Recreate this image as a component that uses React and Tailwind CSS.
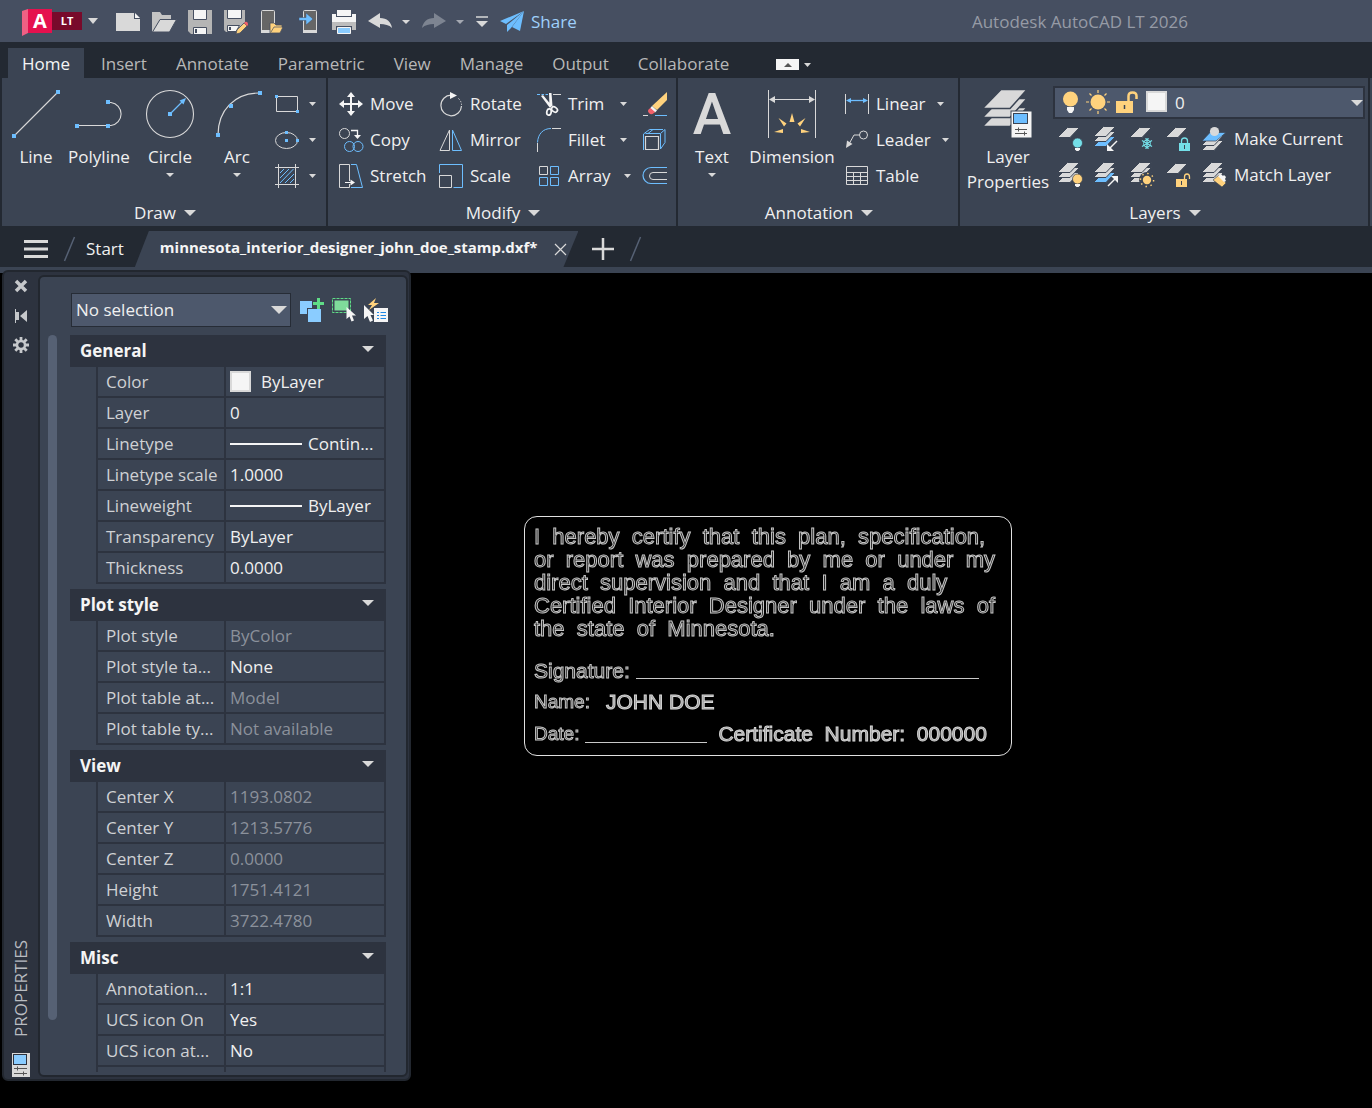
import React from "react";

const W = "#d9d9d9";
const B = "#6dbeff";
const Y = "#ffd27d";
const T = "#74dfe8";
const BG = "#3b4453";

const Svg = ({ w = 24, h = 24, children }) => (
  <svg width={w} height={h} viewBox={`0 0 ${w} ${h}`} fill="none" className="shrink-0 overflow-visible" aria-hidden="true">
    {children}
  </svg>
);

const Caret = ({ w = 8, h = 4, color = W }) => (
  <Svg w={w} h={h}>
    <path d={`M0 0H${w}L${w / 2} ${h}Z`} fill={color} />
  </Svg>
);

const Dot = ({ x, y, s = 4 }) => <rect x={x - s / 2} y={y - s / 2} width={s} height={s} fill={B} />;

/* ---------- quick access icons ---------- */
const Disk = () => (
  <>
    <path d="M0 0H24V24H3L0 21Z" fill="#b5b5b5" />
    <path d="M5.500 0V9.500H18.500V0" fill="#f5f5f5" stroke="#464f61" />
    <path d="M5.500 24V17.500H18.500V24" fill="#f5f5f5" stroke="#464f61" />
    <path d="M7 19H9V23H7Z" fill="#464f61" />
  </>
);
const quick = [
  ["New", <Svg><path d="M0 3H18V9H24V21H0Z" fill={W} /><path d="M19 3L24 8H19Z" fill="#f5f5f5" /></Svg>],
  ["Open", <Svg><path d="M0 22V2H8L10 5H19V10H8L1 22Z" fill="#c4c4c4" /><path d="M8 9.500H24.500L17.500 22H.5Z" fill={W} stroke="#464f61" /></Svg>],
  ["Save", <Svg><Disk /></Svg>],
  ["Save As", <Svg>
    <path d="M0 0H21V12L12 22H2L0 20Z" fill="#b5b5b5" />
    <path d="M3.500 0V8.500H17.500V0" fill="#f5f5f5" stroke="#464f61" />
    <path d="M3.500 15.500H15.500L12 21.500H3.500Z" fill="#f5f5f5" stroke="#464f61" />
    <path d="M5 17H7V20H5Z" fill="#464f61" />
    <path d="M13 20L20 13L23 16L16 23L12 24Z" fill={Y} stroke="#464f61" strokeWidth=".8" />
    <path d="M20 13L21 12Q24 11 24 15L23 16Z" fill="#f2606a" />
  </Svg>],
  ["Open from Web & Mobile", <Svg>
    <rect x="1.500" y=".5" width="13" height="22" rx="1" fill="#666" stroke={W} />
    <path d="M1 20H15V23H1Z" fill={W} />
    <path d="M10 22V13H14L16 15H22V17H23L20 23H10Z" fill={Y} stroke="#464f61" strokeWidth=".8" />
    <path d="M11 22L14 17H23" stroke="#464f61" strokeWidth=".7" />
  </Svg>],
  ["Save to Web & Mobile", <Svg>
    <rect x="7.500" y=".5" width="13" height="22" rx="1" fill="#666" stroke={W} />
    <path d="M7 20H21V23H7Z" fill={W} />
    <path d="M3 7.500H10V3L17 9L10 15V10.500H3Z" fill={B} stroke="#464f61" strokeWidth=".5" />
  </Svg>],
  ["Plot", <Svg>
    <path d="M5 0H19V6H5Z" fill="#f5f5f5" />
    <path d="M0 4H4V7H20V4H24V12H0Z" fill="#f5f5f5" />
    <path d="M0 12H24V20H20V16H4V20H0Z" fill="#bdbdbd" />
    <path d="M5.500 17.500H18.500V23.500H5.500Z" fill="#8accff" stroke="#f5f5f5" />
  </Svg>],
];
const Undo = ({ color }) => (
  <Svg><path d="M0 11L12 3V8C19 8 23 12 24 18C21 15 17 14 12 14V18Z" fill={color} /></Svg>
);

/* ---------- draw icons ---------- */
const LineIcon = () => <Svg w={48} h={48}><path d="M3 45L45 3" stroke={W} strokeWidth="1.100" /><Dot x={2} y={46} /><Dot x={46} y={2} /></Svg>;
const PolylineIcon = () => <Svg w={48} h={48}><path d="M2 35.500H36A11.600 11.600 0 0 0 36 12.500H33" stroke={W} strokeWidth="1.100" /><Dot x={2} y={36} /><Dot x={33} y={36} /><Dot x={33} y={12} /></Svg>;
const CircleIcon = () => (
  <Svg w={48} h={48}>
    <circle cx="24" cy="24" r="23.500" stroke={W} strokeWidth="1.100" />
    <path d="M24 24L37 11" stroke={B} strokeWidth="1.200" />
    <path d="M40 8L37.500 14.500L33.500 10.500Z" fill={B} />
    <Dot x={24} y={24} />
  </Svg>
);
const ArcIcon = () => <Svg w={48} h={48}><path d="M5 45C5 20 22 3 46 3" stroke={W} strokeWidth="1.200" /><Dot x={5} y={45} /><Dot x={18} y={16} /><Dot x={47} y={3} /></Svg>;
const RectIcon = () => <Svg><path d="M1.500 4.500H22.500V19.500H1.500Z" stroke={W} /><Dot x={1.5} y={4.5} s={3} /><Dot x={22.5} y={19.5} s={3} /></Svg>;
const EllipseIcon = () => <Svg><ellipse cx="11.500" cy="12.500" rx="11" ry="8" stroke={W} /><Dot x={11.5} y={4.5} s={3} /><Dot x={11.5} y={12.5} s={3} /><Dot x={22.5} y={12.5} s={3} /></Svg>;
const HatchIcon = () => (
  <Svg>
    <path d="M0 3.500H24M0 20.500H24M3.500 0V24M20.500 0V24" stroke={W} />
    <path d="M5 9L9 5M5 14L14 5M5 19L18.500 5M10 19L19 10M15 19L19 15" stroke={B} />
  </Svg>
);

/* ---------- modify icons ---------- */
const MoveIcon = () => (
  <Svg>
    <path d="M4 12H20M12 4V20" stroke="#f5f5f5" strokeWidth="2" />
    <path d="M12 0L16 5H8ZM12 24L16 19H8ZM0 12L5 8V16ZM24 12L19 8V16Z" fill="#f5f5f5" />
  </Svg>
);
const RotateIcon = () => <Svg><path d="M12 3.200A10.300 10.300 0 1 0 22.500 14" stroke={W} strokeWidth="1.200" /><path d="M11 0L18 3.500L11 7Z" fill="#f5f5f5" /><path d="M19.500 6.500Q22.500 9.500 22.500 13" stroke={W} strokeDasharray="1.500 1.500" /></Svg>;
const TrimIcon = () => (
  <Svg>
    <path d="M0 2.500H3M4.500 2.500H7M8.500 2.500H11" stroke={B} />
    <path d="M16 2.500H24" stroke={W} />
    <path d="M4 4L6 3L15 14L13 16ZM12 1H14.500L15.500 14L12.500 15Z" fill="#f5f5f5" />
    <ellipse cx="12" cy="20" rx="2.200" ry="3.200" stroke="#f5f5f5" strokeWidth="1.700" transform="rotate(12 12 20)" />
    <ellipse cx="17.500" cy="17.500" rx="2.300" ry="3.200" stroke="#f5f5f5" strokeWidth="1.700" transform="rotate(-55 17.500 17.500)" />
  </Svg>
);
const CopyIcon = () => (
  <Svg>
    <circle cx="5.500" cy="5.500" r="5" stroke={W} />
    <circle cx="10.500" cy="18.500" r="5" stroke={B} />
    <circle cx="19" cy="18.500" r="5" stroke={B} />
    <path d="M12 2.500H18.500V8" stroke="#f5f5f5" strokeWidth="1.300" />
    <path d="M15 7H22L18.500 11Z" fill="#f5f5f5" />
  </Svg>
);
const MirrorIcon = () => <Svg><path d="M10.500 2V22.500H1Z" stroke={W} /><path d="M13.500 2V22.500H22.500Z" stroke={B} /></Svg>;
const FilletIcon = () => <Svg><path d="M.5 14.500C1 6 6 .5 14 .5" stroke={B} /><path d="M15 .5H24M.5 15V24" stroke={W} /></Svg>;
const StretchIcon = () => (
  <Svg>
    <path d="M10.500 17V.5H.5V23.500H10.500V20" stroke={W} />
    <path d="M12 .5H17.500L23.500 23.500H12" stroke={B} />
    <path d="M6 18.500H13" stroke="#f5f5f5" />
    <path d="M11.500 15.500L16 18.500L11.500 21.500Z" fill="#f5f5f5" />
  </Svg>
);
const ScaleIcon = () => <Svg><path d="M.5 9V.5H23.500V23.500H14.500" stroke={B} /><path d="M.5 11.500H12.500V23.500H.5Z" stroke={W} /></Svg>;
const ArrayIcon = () => (
  <Svg>
    <path d="M2.500 2.500H10.500V10.500H2.500Z" stroke={W} />
    <path d="M13.500 2.500H21.500V10.500H13.500ZM2.500 13.500H10.500V21.500H2.500ZM13.500 13.500H21.500V21.500H13.500Z" stroke={B} />
  </Svg>
);
const EraseIcon = () => (
  <Svg>
    <path d="M24 0V8L14 18L9 14Z" fill={Y} />
    <path d="M9 14L14 18.500L12 20.500L7 16.500Z" fill="#f5f5f5" />
    <path d="M7.500 16L12 20L11 21Q8 23.500 6 21Q4 19 6 17Z" fill="#f2606a" />
    <path d="M0 23.500H5" stroke={W} /><path d="M12 23.500H24" stroke={B} />
  </Svg>
);
const ExplodeIcon = () => (
  <Svg>
    <path d="M2.500 8.500H15.500V21.500H2.500Z" stroke={W} strokeWidth="1.200" />
    <path d="M.5 22V6L6.500 1.500H20M2.500 5.500H17.500L22 1.500V14.500L17.500 21V6M10 1.500L5 5.500" stroke={B} />
  </Svg>
);
const OffsetIcon = () => <Svg><path d="M24 3.500H8A7.500 7.500 0 0 0 8 19.500H24" stroke={B} strokeWidth="1.200" /><path d="M24 8.500H10A3.500 3.500 0 0 0 10 15.500H24" stroke={W} /></Svg>;

/* ---------- annotation icons ---------- */
const DimensionIcon = () => (
  <Svg w={48} h={48}>
    <path d="M.5 0V48M47.500 0V48M3 9.500H45" stroke={W} />
    <path d="M1 9.500L7 6V13ZM47 9.500L41 6V13Z" fill={W} />
    <path d="M24 23L26.500 32H21.500ZM10.500 28L18.500 33.500L16 36.500ZM37.500 28L29.500 33.500L32 36.500ZM6 42L15 39V43ZM42 42L33 39V43Z" fill={Y} />
  </Svg>
);
const LinearIcon = () => <Svg><path d="M.5 2V22M23.500 2V22" stroke={W} /><path d="M3 8.500H21" stroke={B} strokeWidth="1.300" /><path d="M1 8.500L6 6V11ZM23 8.500L18 6V11Z" fill={B} /></Svg>;
const LeaderIcon = () => <Svg><circle cx="18.500" cy="7" r="4" stroke={W} /><path d="M14.500 7H9L4 16" stroke={W} /><path d="M1 20L2 12.500L7.500 16Z" fill={W} /></Svg>;
const TableIcon = () => <Svg><path d="M1.500 2.500H22.500V20.500H1.500ZM1.500 8.500H22.500M1.500 12.500H22.500M1.500 16.500H22.500M8.500 8.500V20.500M15.500 8.500V20.500" stroke={W} /></Svg>;

/* ---------- layer icons ---------- */
const Sheet = ({ dy = 0, fill = W }) => <path d={`M-.5 ${9.500 + dy}L9.500 ${dy - 0.500}H21.500L12 ${9.500 + dy}Z`} fill={fill} stroke={BG} strokeWidth="1" />;
const Stack = ({ last = W }) => (<><Sheet dy={10} fill={last} /><Sheet dy={5} /><Sheet /></>);
const Bulb = ({ color }) => (<><circle cx="19.500" cy="16" r="5" fill={color} stroke={BG} strokeWidth=".7" /><path d="M17 21H22V22.500L20.500 24H18.500L17 22.500Z" fill="#f5f5f5" /></>);
const layerRows = [
  [
    ["Off", <Svg><Sheet dy={1} /><Bulb color={T} /></Svg>],
    ["Isolate", <Svg><Stack last={B} /><path d="M23 14L16 21" stroke="#f5f5f5" strokeWidth="1.500" /><path d="M13 24V17L20 24Z" fill="#f5f5f5" /></Svg>],
    ["Freeze", <Svg><Sheet dy={1} /><path d="M17 11V22M12 13.500L22 19.500M22 13.500L12 19.500" stroke={T} strokeWidth="1.300" /><circle cx="17" cy="16.500" r="3.500" stroke={T} /><path d="M15 11.500L17 13L19 11.500M15 21.500L17 20L19 21.500" stroke={T} /></Svg>],
    ["Lock", <Svg><Sheet dy={1} /><path d="M15.500 16V14Q15.500 11 18.500 11T21.500 14V16" stroke={T} strokeWidth="1.300" /><path d="M13 16H24V24H13Z" fill={T} /><path d="M18.500 18V22" stroke={BG} /></Svg>],
  ],
  [
    ["Turn All Layers On", <Svg><Stack /><Bulb color={Y} /></Svg>],
    ["Unisolate", <Svg><Stack last={B} /><path d="M14 23L21 16" stroke="#f5f5f5" strokeWidth="1.500" /><path d="M24 13V20L17 13Z" fill="#f5f5f5" /></Svg>],
    ["Thaw All Layers", <Svg><Stack /><circle cx="17" cy="17" r="8" fill={BG} /><circle cx="17" cy="17" r="4.200" fill={Y} /><circle cx="17" cy="17" r="6.600" stroke={Y} strokeWidth="1.500" strokeDasharray="1.500 3.680" /></Svg>],
    ["Unlock", <Svg><Sheet dy={1} /><path d="M18.500 16V14Q18.500 11 21 11T23.500 14V16" stroke={Y} strokeWidth="1.300" /><path d="M10 16H21V24H10Z" fill={Y} /><path d="M15.500 18V22" stroke={BG} /></Svg>],
  ],
];
const MakeCurrentIcon = () => <Svg><Sheet dy={14} /><Sheet dy={9} /><path d="M0 14L8 5.500H24L14 14Z" fill={B} stroke={BG} strokeWidth=".7" /><circle cx="12.500" cy="4.500" r="4.600" fill={W} /></Svg>;
const MatchLayerIcon = () => <Svg><Stack /><path d="M11 17L17 12L24 20L20 24Z" fill={Y} stroke={BG} strokeWidth=".6" /><path d="M16 13L19 11L21 13L22 12L24 14L23 16L24 18L22 19Z" fill="#f5f5f5" /></Svg>;
const SliderSheet = ({ w = 21, h = 27 }) => (
  <>
    <rect width={w} height={h} fill="#f5f5f5" stroke={BG} strokeWidth="1" />
    <rect x="2.500" y="2.500" width={w - 7} height="10" fill={B} stroke={BG} />
    <path d={`M4 18.500H${w - 5}M4 22.500H${w - 5}M7.500 16.500V20.500M${w - 7.500} 20.500V24.500`} stroke="#555" />
  </>
);
const LayerPropsIcon = () => (
  <Svg w={48} h={48}>
    {[18, 9, 0].map((d) => <path key={d} d={`M-1.500 ${18.500 + d}L17 ${d - 0.500}H43L26 ${18.500 + d}Z`} fill={W} stroke={BG} strokeWidth="1.500" />)}
    <g transform="translate(27 21)"><SliderSheet /></g>
  </Svg>
);

/* ---------- ribbon parts ---------- */
const Panel = ({ title, className, children }) => (
  <section aria-label={title} className={`flex flex-col border-r-2 border-[#232932] ${className}`}>
    <div className="flex grow items-start pt-2">{children}</div>
    <button type="button" className="flex h-[26px] items-center justify-center gap-2 pl-[2px] leading-6">
      {title}
      <Caret w={12} h={6} />
    </button>
  </section>
);
const Big = ({ label, caret, icon, className }) => (
  <button type="button" className={`flex flex-col items-center pt-1 leading-[25px] ${className}`}>
    <span className="flex h-12 items-center justify-center">{icon}</span>
    <span className="mt-[6px]">{label}</span>
    {caret && <span className="mt-1 flex"><Caret /></span>}
  </button>
);
const Small = ({ label, icon, caret, className = "gap-[11px]" }) => (
  <div className={`flex h-9 items-center ${className}`}>
    <button type="button" className="flex items-center gap-[7px]">{icon}{label}</button>
    {caret && <button type="button" aria-label={`${label} options`}><Caret w={7} /></button>}
  </div>
);
const IconDrop = ({ label, icon }) => (
  <div className="flex h-9 items-center gap-[10px]">
    <button type="button" aria-label={label}>{icon}</button>
    <button type="button" aria-label={`${label} options`}><Caret w={7} /></button>
  </div>
);

/* ---------- properties palette ---------- */
const Swatch = () => <span className="inline-block size-[21px] border-2 border-[#d9d9d9] bg-[#f5f5f5]" />;
const Rule = () => <span className="inline-block h-[2px] w-[72px] bg-[#f5f5f5]" />;
const groups = [
  { name: "General", rows: [
    ["Color", <span className="flex items-center gap-[10px]"><Swatch />ByLayer</span>],
    ["Layer", "0"],
    ["Linetype", <span className="flex items-center gap-[6px]"><Rule />Contin...</span>],
    ["Linetype scale", "1.0000"],
    ["Lineweight", <span className="flex items-center gap-[6px]"><Rule />ByLayer</span>],
    ["Transparency", "ByLayer"],
    ["Thickness", "0.0000"],
  ] },
  { name: "Plot style", rows: [
    ["Plot style", "ByColor", true],
    ["Plot style ta...", "None"],
    ["Plot table at...", "Model", true],
    ["Plot table ty...", "Not available", true],
  ] },
  { name: "View", rows: [
    ["Center X", "1193.0802", true],
    ["Center Y", "1213.5776", true],
    ["Center Z", "0.0000", true],
    ["Height", "1751.4121", true],
    ["Width", "3722.4780", true],
  ] },
  { name: "Misc", rows: [
    ["Annotation...", "1:1"],
    ["UCS icon On", "Yes"],
    ["UCS icon at...", "No"],
    ["", ""],
  ] },
];

const Group = ({ name, rows }) => (
  <section className="mb-[5px]">
    <button type="button" className="flex h-8 w-full items-center justify-between bg-[#2d333f] pr-3 pl-[10px] font-bold text-[#f5f5f5]">
      {name}
      <span className="mb-1 flex"><Caret w={12} h={6} /></span>
    </button>
    <table className="ml-[26px] w-[290px] table-fixed border-separate border-spacing-0 text-left">
      <tbody>
        {rows.map(([k, v, dim], i) => (
          <tr key={i}>
            <th scope="row" className="h-[31px] w-[130px] overflow-hidden border-x-2 border-b-2 border-[#2d333f] p-0 pl-2 font-normal whitespace-nowrap text-[#cfd1d4]">{k}</th>
            <td className={`h-[31px] overflow-hidden border-r-2 border-b-2 border-[#2d333f] p-0 pl-1 whitespace-nowrap ${dim ? "text-[#8b919b]" : "text-[#f0f0f0]"}`}>{v}</td>
          </tr>
        ))}
      </tbody>
    </table>
  </section>
);

const Palette = () => (
  <aside aria-label="Properties" className="relative -mt-[3px] mb-[27px] ml-[2px] flex w-[409px] shrink-0 rounded-md border-2 border-[#22272f] bg-[#2d333f] pr-px pb-[2px]">
    <div className="flex w-[34px] shrink-0 flex-col items-center pt-[7px]">
      <button type="button" aria-label="Close"><Svg w={14} h={14}><path d="M2 2L12 12M12 2L2 12" stroke="#c6c8cb" strokeWidth="3.500" /></Svg></button>
      <button type="button" aria-label="Auto-hide" className="mt-4"><Svg w={14} h={14}><path d="M1.500 0V14" stroke="#c6c8cb" /><path d="M2 3H5V11H2ZM13 1V13L6 7Z" fill="#c6c8cb" /></Svg></button>
      <button type="button" aria-label="Settings" className="mt-[14px]">
        <Svg w={16} h={16}>
          <circle cx="8" cy="8" r="4" stroke="#c6c8cb" strokeWidth="2.500" />
          <path d="M8 0V4M8 12V16M0 8H4M12 8H16M2.300 2.300L5 5M11 11L13.700 13.700M13.700 2.300L11 5M5 11L2.300 13.700" stroke="#c6c8cb" strokeWidth="2.800" />
        </Svg>
      </button>
      <span className="mt-auto rotate-180 leading-5 text-[#b9bcc1] [writing-mode:vertical-rl]">PROPERTIES</span>
      <span className="mt-4 flex">
        <Svg w={18} h={24}>
          <rect width="18" height="24" fill="#d9d9d9" />
          <rect x="1.500" y="1.500" width="13" height="10" fill="#8accff" stroke="#2d333f" />
          <path d="M2 15.500H15M2 20.500H15M5.500 13.500V17.500M11.500 18.500V22.500" stroke="#555" />
        </Svg>
      </span>
    </div>
    <div className="mt-[3px] flex min-w-0 grow flex-col overflow-hidden rounded-md border-2 border-[#22272f] bg-[#3b4453] pb-[3px]">
      <div className="mt-4 ml-[31px] flex shrink-0 items-start gap-2">
        <div className="flex h-[34px] w-[220px] items-center border border-[#262c36] bg-[#4d586c] pr-[3px]">
          <select aria-label="Selection" className="h-full grow appearance-none bg-transparent pl-1 text-[#f0f0f0]">
            <option>No selection</option>
          </select>
          <Caret w={16} h={8} />
        </div>
        <button type="button" aria-label="Toggle PICKADD" className="mt-[5px] ml-px">
          <Svg><path d="M0 3H12V10H7V16H0Z" fill="#8accff" /><path d="M8 11H21V24H8Z" fill="#8accff" /><path d="M18.500 0V11M13 5.500H24" stroke="#5fdc87" strokeWidth="3" /></Svg>
        </button>
        <button type="button" aria-label="Select Objects" className="mt-[5px]">
          <Svg><path d="M2.500 2.500H16.500V12.500H2.500Z" fill="#7fdb9b" /><path d="M.5 .5H18.500V14.500H.5Z" stroke="#5fdc87" strokeDasharray="3 1" /><path d="M14.500 9V21L17.500 18.500L19.500 23.500L22 22.500L20 17.500H24Z" fill="#f5f5f5" /></Svg>
        </button>
        <button type="button" aria-label="Quick Select" className="mt-[5px]">
          <Svg><path d="M12 0L4 7H8L5 12L15 5H10Z" fill={Y} /><path d="M0 7V21L3.500 18L6 24L9 22.500L6.500 17H10Z" fill="#f5f5f5" /><path d="M10 10H24V24H10Z" fill="#f5f5f5" /><path d="M13 14.500H15M13 17.500H15M13 20.500H15M16.500 14.500H22M16.500 17.500H22M16.500 20.500H22" stroke="#1e88e5" /></Svg>
        </button>
      </div>
      <div className="mt-2 flex min-h-0 grow">
        <div className="mb-[52px] ml-2 w-[9px] shrink-0 rounded-full bg-[#566174]" />
        <div className="ml-[13px] w-[316px] overflow-hidden">
          {groups.map((g) => <Group key={g.name} {...g} />)}
        </div>
      </div>
    </div>
  </aside>
);

/* ---------- stamp drawing ---------- */
const outline = "text-[#222] [-webkit-text-stroke:1px_#c4c4c4]";
const bold = "text-[#999] [-webkit-text-stroke:1px_#d4d4d4]";
const stampLines = [
  "I  hereby  certify  that  this  plan,  specification,",
  "or  report  was  prepared  by  me  or  under  my",
  "direct  supervision  and  that  I  am  a  duly",
  "Certified  Interior  Designer  under  the  laws  of",
  "the  state  of  Minnesota.",
];
const Stamp = () => (
  <div className="absolute top-[243px] left-[113px] w-[488px] rounded-[13px] border-[1.5px] border-[#e0e0e0] pt-2 pr-4 pb-[5px] pl-[9px] font-['Liberation_Sans',Arial,sans-serif] whitespace-pre will-change-transform">
    <p className={`text-[22px] leading-[23px] ${outline}`}>
      {stampLines.map((l) => <span key={l} className="block">{l}</span>)}
    </p>
    <div className="mt-4 flex items-end gap-[6px] pr-4 leading-[30px]">
      <span className={`text-[21px] ${outline}`}>Signature:</span>
      <span className="mb-[7px] h-px grow bg-[#c8c8c8]" />
    </div>
    <div className="flex items-end gap-4 leading-8">
      <span className={`text-[19px] ${outline}`}>Name:</span>
      <span className={`text-[21px] ${bold}`}>JOHN DOE</span>
    </div>
    <div className="flex items-end gap-[6px] leading-8">
      <span className={`text-[19px] ${outline}`}>Date:</span>
      <span className="mb-[7px] h-px w-[122px] bg-[#c8c8c8]" />
      <span className={`ml-[5px] text-[21px] ${bold}`}>{"Certificate  Number:  000000"}</span>
    </div>
  </div>
);

const Slash = () => <Svg w={11} h={24}><path d="M10.500 0L.5 24" stroke="#566174" strokeWidth="1.500" /></Svg>;

export default function App() {
  return (
    <div className="flex h-screen flex-col overflow-hidden bg-black font-['Open_Sans','Noto_Sans',sans-serif] text-[17px] text-[#f0f0f0]">
      <header className="flex h-[42px] shrink-0 items-center bg-[#464f61] pt-[2px] pl-[22px]">
        <button type="button" aria-label="Application menu" className="flex items-center">
          <Svg w={6} h={28}><path d="M0 3L6 1V25L0 28Z" fill="#ef6084" /></Svg>
          <span className="mb-[2px] flex size-6 items-center justify-center bg-[#e5104e] text-[20px] leading-6 font-bold text-white">A</span>
          <span className="mb-[2px] flex h-[18px] w-[30px] items-center justify-center bg-[#780a2b] text-[11px] font-bold text-white">LT</span>
          <span className="mb-[2px] ml-[6px] flex"><Caret w={10} h={6} /></span>
        </button>
        <div className="ml-[18px] flex gap-3">
          {quick.map(([n, icon]) => <button key={n} type="button" aria-label={n}>{icon}</button>)}
        </div>
        <button type="button" aria-label="Undo" className="ml-3"><Undo color={W} /></button>
        <button type="button" aria-label="Undo history" className="ml-[10px]"><Caret /></button>
        <button type="button" aria-label="Redo" className="ml-3 -scale-x-100"><Undo color="#7d8491" /></button>
        <button type="button" aria-label="Redo history" className="ml-[10px]"><Caret color="#a5a9b2" /></button>
        <button type="button" aria-label="Customize toolbar" className="ml-3"><Svg w={12} h={12}><path d="M0 1H12" stroke={W} strokeWidth="1.500" /><path d="M0 5H12L6 11Z" fill={W} /></Svg></button>
        <button type="button" className="ml-3 flex items-center gap-[7px] text-[#9fd0fb]">
          <Svg w={24} h={22}>
            <path d="M24 0L0 10L6 13Z" fill={B} /><path d="M24 0L7 14V21L11 17Z" fill={B} /><path d="M24 0L12 16L20 20Z" fill={B} />
          </Svg>
          Share
        </button>
        <h1 className="mr-[184px] ml-auto text-[#969ba6]">Autodesk AutoCAD LT 2026</h1>
      </header>

      <nav aria-label="Ribbon tabs" className="flex h-9 shrink-0 items-end bg-[#232932] pl-2 text-[#b8b8b8]">
        <button type="button" className="h-[30px] bg-[#3b4453] px-[14px] pt-px text-[#f5f5f5]">Home</button>
        <div className="ml-[17px] flex h-[30px] items-center gap-[29px] pt-px">
          {["Insert", "Annotate", "Parametric", "View", "Manage", "Output", "Collaborate"].map((t) => <button key={t} type="button">{t}</button>)}
        </div>
        <div className="ml-[47px] flex h-[30px] items-center gap-[5px] pt-[3px]">
          <button type="button" aria-label="Minimize ribbon" className="flex h-[11px] w-[23px] items-center justify-center bg-[#f5f5f5]"><Svg w={8} h={4}><path d="M0 4L4 0L8 4Z" fill="#555" /></Svg></button>
          <button type="button" aria-label="Ribbon display options"><Caret w={7} /></button>
        </div>
      </nav>

      <div className="flex h-[149px] shrink-0 border-b border-l-2 border-[#232932] bg-[#3b4453]">
        <Panel title="Draw" className="w-[326px]">
          <Big label="Line" icon={<LineIcon />} className="ml-1 w-[60px]" />
          <Big label="Polyline" icon={<PolylineIcon />} className="w-[66px]" />
          <Big label="Circle" icon={<CircleIcon />} caret className="w-[76px]" />
          <Big label="Arc" icon={<ArcIcon />} caret className="w-[58px]" />
          <div className="ml-[9px]">
            <IconDrop label="Rectangle" icon={<RectIcon />} />
            <IconDrop label="Ellipse" icon={<EllipseIcon />} />
            <IconDrop label="Hatch" icon={<HatchIcon />} />
          </div>
        </Panel>
        <Panel title="Modify" className="w-[350px]">
          <div className="grid grid-cols-[100px_98px_106px_24px] pl-[11px]">
            <Small label="Move" icon={<MoveIcon />} />
            <Small label="Rotate" icon={<RotateIcon />} />
            <Small label="Trim" icon={<TrimIcon />} caret className="justify-between pr-4" />
            <button type="button" aria-label="Erase"><EraseIcon /></button>
            <Small label="Copy" icon={<CopyIcon />} />
            <Small label="Mirror" icon={<MirrorIcon />} />
            <Small label="Fillet" icon={<FilletIcon />} caret className="justify-between pr-4" />
            <button type="button" aria-label="Explode"><ExplodeIcon /></button>
            <Small label="Stretch" icon={<StretchIcon />} />
            <Small label="Scale" icon={<ScaleIcon />} />
            <Small label="Array" icon={<ArrayIcon />} caret className="justify-between pr-3" />
            <button type="button" aria-label="Offset"><OffsetIcon /></button>
          </div>
        </Panel>
        <Panel title="Annotation" className="w-[282px]">
          <Big label="Text" caret icon={<span className="font-['Roboto',sans-serif] text-[58px] leading-[48px] font-medium text-[#d9d9d9]">A</span>} className="ml-2 w-[52px]" />
          <Big label="Dimension" icon={<DimensionIcon />} className="ml-[10px] w-[88px]" />
          <div className="ml-[9px]">
            <Small label="Linear" icon={<LinearIcon />} caret />
            <Small label="Leader" icon={<LeaderIcon />} caret />
            <Small label="Table" icon={<TableIcon />} />
          </div>
        </Panel>
        <Panel title="Layers" className="mr-[2px] grow">
          <Big label={<>Layer<br />Properties</>} icon={<LayerPropsIcon />} className="ml-1 w-[88px]" />
          <div className="mr-[3px] ml-[1px] grow">
            <div className="flex h-[33px] items-center border-2 border-[#2d333f] bg-[#4d586c] pl-[6px]">
              <Svg w={22} h={24}><circle cx="9.500" cy="8" r="7.500" fill={Y} /><path d="M6 16H13V19L11 22H8L6 19Z" fill="#f5f5f5" /></Svg>
              <span className="ml-[3px] flex"><Svg><circle cx="12" cy="11" r="7.500" fill={Y} /><path d="M12 -1V2M12 20V23M0 11H3M21 11H24M3.500 2.500L5.500 4.500M18.500 17.500L20.500 19.500M20.500 2.500L18.500 4.500M5.500 17.500L3.500 19.500" stroke={Y} strokeWidth="1.200" /></Svg></span>
              <span className="ml-[6px] flex"><Svg w={22}><path d="M12.500 10V5Q12.500 1.500 16.500 1.500T20.500 5V8" stroke={Y} strokeWidth="2.500" /><path d="M0 10H17V22H0Z" fill={Y} /><path d="M8.500 14V18" stroke={BG} strokeWidth="1.500" /></Svg></span>
              <span className="mb-[2px] ml-2 flex"><Swatch /></span>
              <select aria-label="Current layer" className="ml-2 h-full grow appearance-none bg-transparent text-[#f0f0f0]">
                <option>0</option>
              </select>
              <Caret w={12} h={6} />
            </div>
            <div className="mt-[2px] pl-[5px]">
              {layerRows.map((row, i) => (
                <div key={i} className="flex h-9 items-center gap-3">
                  {row.map(([n, icon]) => <button key={n} type="button" aria-label={n}>{icon}</button>)}
                  <button type="button" className="flex items-center gap-2 whitespace-nowrap">
                    {i === 0 ? <MakeCurrentIcon /> : <MatchLayerIcon />}
                    {i === 0 ? "Make Current" : "Match Layer"}
                  </button>
                </div>
              ))}
            </div>
          </div>
        </Panel>
      </div>

      <nav aria-label="Drawing tabs" className="flex h-[46px] shrink-0 items-stretch border-b-[6px] border-[#3b4453] bg-[#232932] pt-1 pl-6">
        <button type="button" aria-label="File menu"><Svg w={24} h={18}><path d="M0 1.500H24M0 9H24M0 16.500H24" stroke={W} strokeWidth="3" /></Svg></button>
        <span className="ml-4 flex items-center"><Slash /></span>
        <button type="button" className="ml-[11px]">Start</button>
        <div className="ml-[11px] flex items-center bg-[#3b4453] pr-3 pl-[25px] [clip-path:polygon(14px_0,100%_0,calc(100%-15px)_100%,0_100%)]">
          <button type="button" className="pb-[3px] text-[15px] font-bold text-[#f5f5f5]">minnesota_interior_designer_john_doe_stamp.dxf*</button>
          <button type="button" aria-label="Close tab" className="ml-[18px]"><Svg w={11} h={11}><path d="M0 0L11 11M11 0L0 11" stroke={W} strokeWidth="1.200" /></Svg></button>
        </div>
        <button type="button" aria-label="New tab" className="ml-[14px]"><Svg w={22} h={22}><path d="M0 11H22M11 0V22" stroke={W} strokeWidth="2.500" /></Svg></button>
        <span className="ml-4 flex items-center"><Slash /></span>
      </nav>

      <main className="flex min-h-0 grow">
        <Palette />
        <div className="relative grow">
          <Stamp />
        </div>
      </main>
    </div>
  );
}
